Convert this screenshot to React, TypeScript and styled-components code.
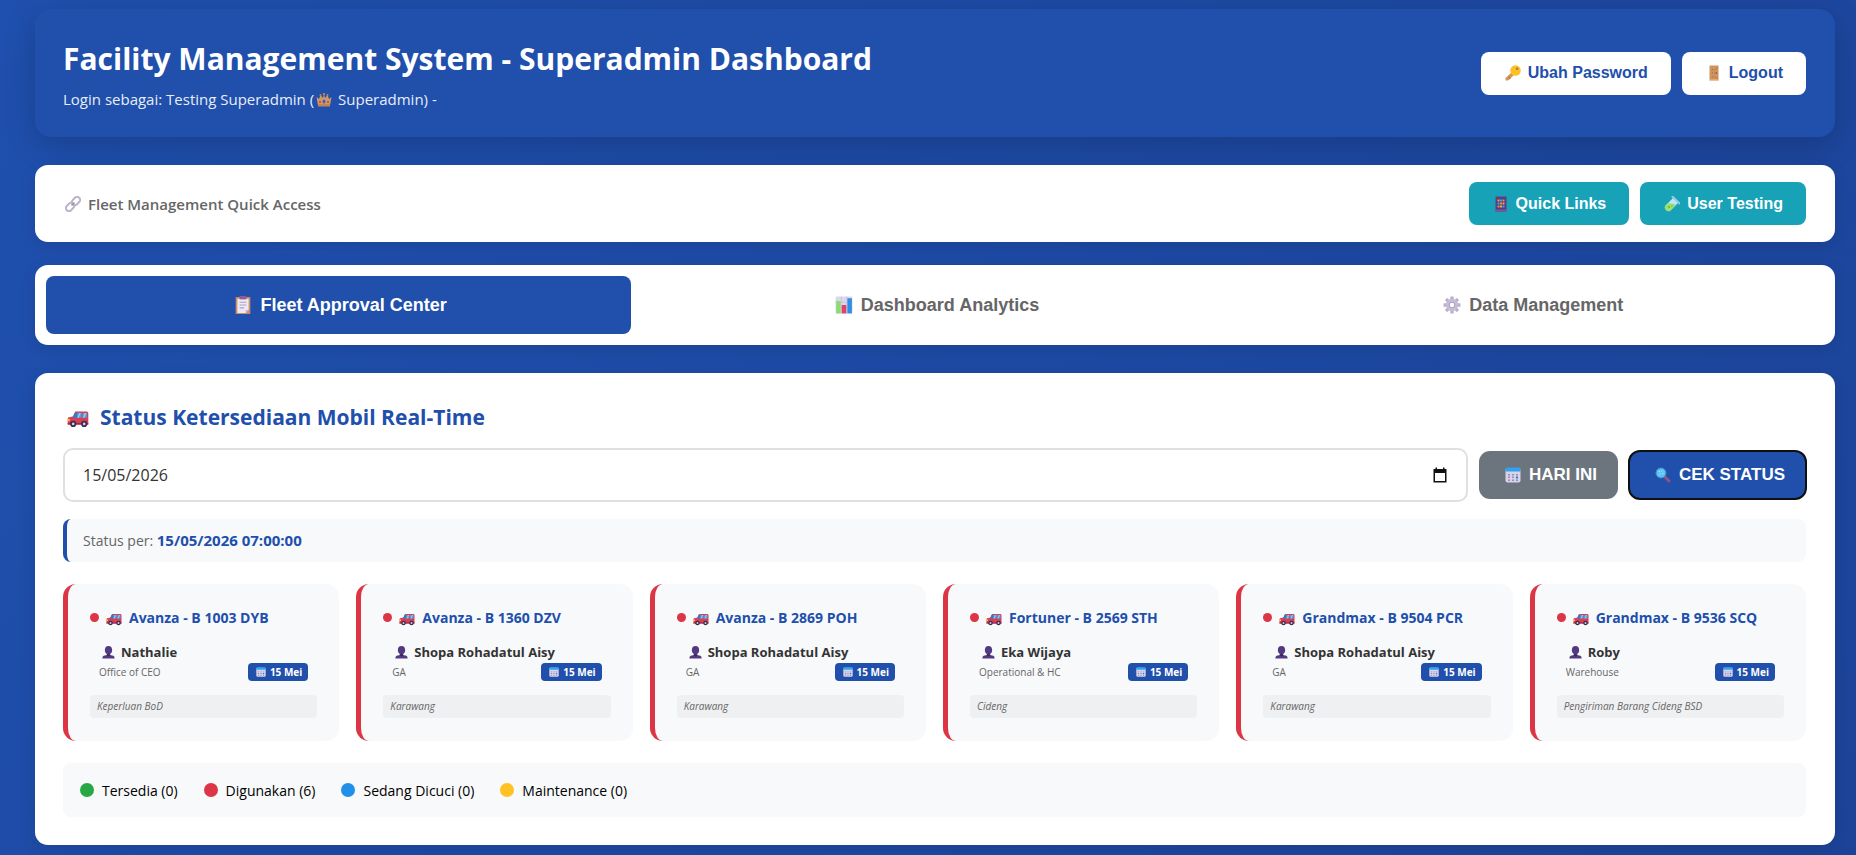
import React, { useState } from "react";
import styled, { createGlobalStyle, css } from "styled-components";

const brand = "#204fac";
const red = "#dc3545";
const sans = '"Open Sans", "Noto Sans", sans-serif';
const arial = '"Liberation Sans", Arial, sans-serif';

const GlobalStyle = createGlobalStyle`
  * { box-sizing: border-box; }
  html { background: #1d459b; }
  body {
    margin: 0;
    font-family: ${sans};
    color: #333;
    background: linear-gradient(135deg, #1f50af 0%, #1c4398 100%);
  }
  h1, h2, h3, p, ul { margin: 0; padding: 0; }
  button, input { font: inherit; }
`;

/* ---------- icons ---------- */

const Glyph = styled.svg<{ $size: number }>`
  width: ${(p) => p.$size}px;
  height: ${(p) => p.$size}px;
  flex: none;
  display: block;
`;

type IconName =
  | "crown" | "key" | "door" | "link" | "keypad" | "tube" | "clipboard"
  | "chart" | "gear" | "car" | "calendar" | "lens" | "person" | "picker";

const teeth = [0, 45, 90, 135, 180, 225, 270, 315];

const drawings: Record<IconName, React.ReactNode> = {
  crown: (
    <>
      <path d="M1 12l5 4 3-8 5 6 2-8 2 8 5-6 3 8 5-4-3 17H4z" fill="#e6a15b" />
      <circle cx="16" cy="6" r="2" fill="#e6a15b" />
      <circle cx="9" cy="8" r="2" fill="#d98d4a" />
      <circle cx="23" cy="8" r="2" fill="#d98d4a" />
      <path d="M4 26h24v5H4z" fill="#d58b4a" />
      <path d="M16 16l3.500 5-3.500 5-3.500-5z" fill="#3f62c9" />
      <circle cx="8" cy="22" r="2.2" fill="#e0415f" />
      <circle cx="24" cy="22" r="2.2" fill="#e0415f" />
    </>
  ),
  key: (
    <>
      <path d="M13 15l5 5L6 31H1v-5z" fill="#d9955b" />
      <path d="M6 26l3 3 3-3-3-3z" fill="#c27f4c" />
      <circle cx="21" cy="11" r="10.5" fill="#fcc129" />
      <circle cx="24" cy="7.5" r="2.6" fill="#b7763f" />
    </>
  ),
  door: (
    <>
      <path d="M7 1h18v30H7z" fill="#cf935f" />
      <path d="M7 29h18v2H7z" fill="#e9b98c" />
      <path d="M12 9h2M17 9h2M12 16h2M17 16h2M12 24h2M17 24h2M22 5v2M22 25v2" stroke="#a46c43" strokeWidth="2" />
      <circle cx="21" cy="16" r="1.5" fill="#7f4d3a" />
    </>
  ),
  link: (
    <g fill="none" stroke="#bdb4c8" strokeWidth="4">
      <rect x="13" y="4" width="18" height="12" rx="6" transform="rotate(-45 22 10)" />
      <rect x="1" y="16" width="18" height="12" rx="6" transform="rotate(-45 10 22)" />
      <path d="M13 19l6-6" stroke="#978da8" strokeWidth="3" />
    </g>
  ),
  keypad: (
    <>
      <path d="M5 1h22v30H5z" fill="#5a3e85" />
      <path d="M5 27h22v4H5z" fill="#77569c" />
      <path d="M8 6h16v19H8z" fill="#4a3a78" />
      <path d="M9 7h4v4H9zM19 13h4v4h-4zM14 19h4v4h-4z" fill="#f7a94c" />
      <path d="M14 7h4v4h-4zM9 13h4v4H9zM19 19h4v4h-4z" fill="#43a5e8" />
      <path d="M19 7h4v4h-4zM14 13h4v4h-4zM9 19h4v4H9z" fill="#f08a5f" />
    </>
  ),
  tube: (
    <>
      <path d="M19 3l10 10-15 15a7 7 0 01-10-10z" fill="#bfe6f4" />
      <path d="M8 14l16 3-10 11a7 7 0 01-10-10z" fill="#9be06c" />
      <path d="M17 1l14 14" stroke="#8ecbe6" strokeWidth="4" strokeLinecap="round" />
      <circle cx="10" cy="22" r="2" fill="#63b94a" />
      <circle cx="16" cy="20" r="1.6" fill="#63b94a" />
    </>
  ),
  clipboard: (
    <>
      <path d="M3 2h26v30H3z" fill="#d08e68" />
      <path d="M6 5h20v20l-5 5H6z" fill="#ece8f5" />
      <path d="M21 30v-5h5z" fill="#b9aed0" />
      <path d="M10 0h12v6H10z" fill="#8f5a96" />
      <path d="M10 11h12M10 16h12M10 21h8" stroke="#aaa3c2" strokeWidth="2" />
    </>
  ),
  chart: (
    <>
      <rect x="1" y="1" width="30" height="30" rx="2" fill="#dcd8ec" />
      <path d="M1 11h30M1 21h30M11 1v30M21 1v30" stroke="#bdb6d4" />
      <path d="M2 9h8v22H2z" fill="#8fdc6c" />
      <path d="M12 16h8v15h-8z" fill="#e2416a" />
      <path d="M22 4h8v27h-8z" fill="#2f8ee6" />
    </>
  ),
  gear: (
    <>
      {teeth.map((a) => (
        <rect key={a} x="13" y="1" width="6" height="7" rx="1" fill="#b8afca" transform={`rotate(${a} 16 16)`} />
      ))}
      <circle cx="16" cy="16" r="8" fill="none" stroke="#c6bed6" strokeWidth="6" />
      <circle cx="16" cy="16" r="5" fill="none" stroke="#9a8fae" strokeWidth="1.5" />
    </>
  ),
  car: (
    <>
      <path d="M12 8h16c2 0 3 1 3 3v16H1v-8c0-2 1-3 4-3l4-1z" fill="#dc3d50" />
      <path d="M11 10h4v7H8z" fill="#2b7fd0" />
      <path d="M15 10h6v7h-6zM22.500 10H29v7h-6.500z" fill="#3fa9f2" />
      <path d="M18 10h2l-3 7h-2zM26 10h2l-3 7h-2z" fill="#8fd3fa" />
      <path d="M1 25h30v2H1z" fill="#8c2740" />
      <path d="M1 19h3v3H1z" fill="#ffc83d" />
      <circle cx="9" cy="26" r="4.500" fill="#3b2b55" />
      <circle cx="25" cy="26" r="4.500" fill="#3b2b55" />
      <circle cx="9" cy="26" r="1.900" fill="#d6d0e3" />
      <circle cx="25" cy="26" r="1.900" fill="#d6d0e3" />
    </>
  ),
  calendar: (
    <>
      <rect x="1" y="2" width="30" height="29" rx="4" fill="#d9d3ea" />
      <path d="M1 9V5a4 4 0 014-4h22a4 4 0 014 4v4z" fill="#2fa3f0" />
      <path d="M6 14h4v3H6zM14 14h4v3h-4zM22 14h4v3h-4zM6 19h4v3H6zM14 19h4v3h-4zM6 25h4v3H6zM14 25h4v3h-4z" fill="#978eb2" />
      <path d="M22 19h4v4h-4z" fill="#1b7fe0" />
      <path d="M22 25h4v3h-4z" fill="#978eb2" />
    </>
  ),
  lens: (
    <>
      <path d="M20 20l8 8" stroke="#8d5584" strokeWidth="6" strokeLinecap="round" />
      <circle cx="12" cy="12" r="10" fill="#5cc2f7" stroke="#3c8fc4" strokeWidth="2" />
      <path d="M8 9h2M13 8h2M9 14h2M15 13h2" stroke="#bfe9ff" strokeWidth="2" />
    </>
  ),
  person: (
    <>
      <path d="M16 0c6 0 9 4 9 10 0 5-2 8-5 10v2l8 2c2 1 3 3 3 7H1c0-4 1-6 3-7l8-2v-2c-3-2-5-5-5-10 0-6 3-10 9-10z" fill="#533a80" />
      <path d="M12 20h8v3l-4 3-4-3z" fill="#3c2561" />
    </>
  ),
  picker: (
    <path fillRule="evenodd" d="M7 1h3v3h12V1h3v3h4v27H3V4h4zM6 12v16h20V12z" fill="#111" />
  ),
};

const Icon = ({ name, size }: { name: IconName; size: number }) => (
  <Glyph $size={size} viewBox="0 0 32 32" aria-hidden="true">
    {drawings[name]}
  </Glyph>
);

/* ---------- page parts ---------- */

const Page = styled.main`
  min-height: 100vh;
  padding: 9px 21px 10px 35px;
`;

const Header = styled.header`
  display: flex;
  align-items: center;
  justify-content: space-between;
  padding: 26px 29px 26px 28px;
  margin-bottom: 28px;
  border-radius: 16px;
  background: ${brand};
  color: #fff;
  box-shadow: 0 8px 32px rgba(0, 0, 0, 0.2);
`;

const Title = styled.h1`
  font-size: 30px;
  line-height: 48px;
  font-weight: 700;
`;

const LoginLine = styled.p`
  display: flex;
  align-items: center;
  margin-top: 4px;
  font-size: 15px;
  line-height: 24px;
  opacity: 0.9;
  white-space: pre;
  gap: 2px;
`;

const Actions = styled.div`
  display: flex;
  gap: 11px;
`;

const ActionButton = styled.button<{ $tone: "light" | "teal" }>`
  display: flex;
  align-items: center;
  gap: 7px;
  height: 43px;
  padding: 0 23px 0 24px;
  border: 0;
  border-radius: 8px;
  font-family: ${arial};
  font-size: 16px;
  font-weight: 700;
  ${(p) =>
    p.$tone === "light"
      ? css`background: #fff; color: ${brand};`
      : css`background: #18a2b8; color: #fff;`}
`;

const QuickBar = styled.section`
  display: flex;
  align-items: center;
  justify-content: space-between;
  padding: 17px 29px 17px 28px;
  margin-bottom: 23px;
  border-radius: 13px;
  background: #fff;
  box-shadow: 0 4px 16px rgba(0, 0, 0, 0.1);
`;

const QuickLabel = styled.p`
  display: flex;
  align-items: center;
  gap: 7px;
  padding-left: 2px;
  color: #666;
  font-size: 15px;
  font-weight: 600;
`;

const Tabs = styled.nav`
  display: grid;
  grid-template-columns: repeat(3, 1fr);
  gap: 11px;
  padding: 11px;
  margin-bottom: 28px;
  border-radius: 13px;
  background: #fff;
  box-shadow: 0 4px 16px rgba(0, 0, 0, 0.1);
`;

const Tab = styled.button<{ $active: boolean }>`
  display: flex;
  align-items: center;
  justify-content: center;
  gap: 8px;
  height: 58px;
  padding: 0 0 0 4px;
  border: 0;
  border-radius: 8px;
  background: ${(p) => (p.$active ? brand : "transparent")};
  color: ${(p) => (p.$active ? "#fff" : "#666")};
  font-family: ${arial};
  font-size: 18px;
  font-weight: 700;
`;

const Panel = styled.section`
  padding: 28px 29px 28px 28px;
  border-radius: 13px;
  background: #fff;
  box-shadow: 0 4px 16px rgba(0, 0, 0, 0.1);
`;

const PanelTitle = styled.h2`
  display: flex;
  align-items: center;
  gap: 11px;
  padding-left: 4px;
  margin-bottom: 15px;
  color: ${brand};
  font-size: 21px;
  line-height: 32px;
  font-weight: 700;
`;

const Filters = styled.form`
  display: flex;
  align-items: center;
  gap: 11px;
  margin-bottom: 17px;
`;

const DateField = styled.label`
  flex: 1;
  display: flex;
  align-items: center;
  height: 54px;
  padding: 0 18px;
  border: 2px solid #e0e0e0;
  border-radius: 10px;
`;

const DateInput = styled.input`
  flex: 1;
  min-width: 0;
  padding: 0;
  border: 0;
  outline: 0;
  background: transparent;
  color: #333;
  font-size: 16px;
`;

const FilterButton = styled.button<{ $focused?: boolean }>`
  display: flex;
  align-items: center;
  gap: 8px;
  height: 48px;
  padding: 0 21px 0 26px;
  border: 0;
  border-radius: 11px;
  color: #fff;
  font-family: ${arial};
  font-size: 17px;
  font-weight: 700;
  background: ${(p) => (p.$focused ? brand : "#6c757d")};
  ${(p) => p.$focused && css`outline: 2px solid #101010; outline-offset: -1px;`}
`;

const StatusLine = styled.p`
  padding: 0 16px;
  margin-bottom: 22px;
  border-left: 4px solid ${brand};
  border-radius: 8px;
  background: #f8f9fb;
  color: #666;
  font-size: 14px;
  line-height: 43px;

  strong {
    color: ${brand};
    font-size: 15px;
    line-height: 1;
  }
`;

const CarGrid = styled.div`
  display: grid;
  grid-template-columns: repeat(6, 1fr);
  gap: 17px;
  margin-bottom: 22px;
`;

const CarCard = styled.article`
  padding: 22px 22px 23px;
  border-left: 5px solid ${red};
  border-radius: 13px;
  background: #f8f9fb;
`;

const CarTitle = styled.h3`
  display: flex;
  align-items: center;
  gap: 7px;
  margin-bottom: 13px;
  color: ${brand};
  font-size: 14px;
  line-height: 23px;
  font-weight: 700;
  white-space: nowrap;
`;

const Dot = styled.span<{ $color: string; $size: number }>`
  flex: none;
  width: ${(p) => p.$size}px;
  height: ${(p) => p.$size}px;
  border-radius: 50%;
  background: ${(p) => p.$color};
`;

const Borrower = styled.div`
  padding: 0 9px;
  margin-bottom: 14px;
`;

const BorrowerName = styled.p`
  display: flex;
  align-items: center;
  gap: 6px;
  padding-left: 3px;
  font-size: 13px;
  line-height: 21px;
  font-weight: 700;
`;

const BorrowerMeta = styled.div`
  display: flex;
  align-items: center;
  justify-content: space-between;
  color: #666;
  font-size: 10px;
  line-height: 18px;
`;

const DateBadge = styled.span`
  display: flex;
  align-items: center;
  gap: 4px;
  padding: 0 6px 0 8px;
  border-radius: 4px;
  background: ${brand};
  color: #fff;
  font-weight: 700;
`;

const Note = styled.p`
  padding: 0 7px;
  border-radius: 4px;
  background: #eff0f2;
  color: #666;
  font-size: 10px;
  line-height: 23px;
  font-style: italic;
`;

const Legend = styled.ul`
  display: flex;
  align-items: center;
  gap: 26px;
  min-height: 54px;
  padding: 0 17px;
  border-radius: 8px;
  background: #f8f9fb;
  list-style: none;
`;

const LegendItem = styled.li`
  display: flex;
  align-items: center;
  gap: 8px;
  color: #000;
  font-size: 14px;
  font-weight: 500;
`;

/* ---------- data ---------- */

const tabs: { label: string; icon: IconName }[] = [
  { label: "Fleet Approval Center", icon: "clipboard" },
  { label: "Dashboard Analytics", icon: "chart" },
  { label: "Data Management", icon: "gear" },
];

const cars = [
  { car: "Avanza - B 1003 DYB", name: "Nathalie", dept: "Office of CEO", note: "Keperluan BoD" },
  { car: "Avanza - B 1360 DZV", name: "Shopa Rohadatul Aisy", dept: "GA", note: "Karawang" },
  { car: "Avanza - B 2869 POH", name: "Shopa Rohadatul Aisy", dept: "GA", note: "Karawang" },
  { car: "Fortuner - B 2569 STH", name: "Eka Wijaya", dept: "Operational & HC", note: "Cideng" },
  { car: "Grandmax - B 9504 PCR", name: "Shopa Rohadatul Aisy", dept: "GA", note: "Karawang" },
  { car: "Grandmax - B 9536 SCQ", name: "Roby", dept: "Warehouse", note: "Pengiriman Barang Cideng BSD" },
];

const legend = [
  { label: "Tersedia (0)", color: "#28a745" },
  { label: "Digunakan (6)", color: red },
  { label: "Sedang Dicuci (0)", color: "#2090e8" },
  { label: "Maintenance (0)", color: "#ffc124" },
];

export default function App() {
  const [active, setActive] = useState(0);
  const [date, setDate] = useState("15/05/2026");

  return (
    <>
      <GlobalStyle />
      <Page>
        <Header>
          <div>
            <Title>Facility Management System - Superadmin Dashboard</Title>
            <LoginLine>
              <span>Login sebagai: Testing Superadmin (</span>
              <Icon name="crown" size={16} />
              <span> Superadmin) -</span>
            </LoginLine>
          </div>
          <Actions>
            <ActionButton type="button" $tone="light">
              <Icon name="key" size={16} />Ubah Password
            </ActionButton>
            <ActionButton type="button" $tone="light">
              <Icon name="door" size={16} />Logout
            </ActionButton>
          </Actions>
        </Header>

        <QuickBar>
          <QuickLabel>
            <Icon name="link" size={16} />Fleet Management Quick Access
          </QuickLabel>
          <Actions>
            <ActionButton type="button" $tone="teal">
              <Icon name="keypad" size={16} />Quick Links
            </ActionButton>
            <ActionButton type="button" $tone="teal">
              <Icon name="tube" size={16} />User Testing
            </ActionButton>
          </Actions>
        </QuickBar>

        <Tabs>
          {tabs.map((t, i) => (
            <Tab key={t.label} type="button" $active={i === active} onClick={() => setActive(i)}>
              <Icon name={t.icon} size={18} />{t.label}
            </Tab>
          ))}
        </Tabs>

        <Panel>
          <PanelTitle>
            <Icon name="car" size={22} />Status Ketersediaan Mobil Real-Time
          </PanelTitle>
          <Filters onSubmit={(e) => e.preventDefault()}>
            <DateField>
              <DateInput
                aria-label="Tanggal"
                value={date}
                onChange={(e) => setDate(e.target.value)}
              />
              <Icon name="picker" size={16} />
            </DateField>
            <FilterButton type="button" onClick={() => setDate("15/05/2026")}>
              <Icon name="calendar" size={16} />HARI INI
            </FilterButton>
            <FilterButton type="submit" $focused>
              <Icon name="lens" size={16} />CEK STATUS
            </FilterButton>
          </Filters>

          <StatusLine>
            Status per: <strong>15/05/2026 07:00:00</strong>
          </StatusLine>

          <CarGrid>
            {cars.map((c) => (
              <CarCard key={c.car}>
                <CarTitle>
                  <Dot $color={red} $size={9} />
                  <Icon name="car" size={16} />
                  {c.car}
                </CarTitle>
                <Borrower>
                  <BorrowerName>
                    <Icon name="person" size={13} />{c.name}
                  </BorrowerName>
                  <BorrowerMeta>
                    <span>{c.dept}</span>
                    <DateBadge>
                      <Icon name="calendar" size={10} />15 Mei
                    </DateBadge>
                  </BorrowerMeta>
                </Borrower>
                <Note>{c.note}</Note>
              </CarCard>
            ))}
          </CarGrid>

          <Legend>
            {legend.map((l) => (
              <LegendItem key={l.label}>
                <Dot $color={l.color} $size={14} />{l.label}
              </LegendItem>
            ))}
          </Legend>
        </Panel>
      </Page>
    </>
  );
}
